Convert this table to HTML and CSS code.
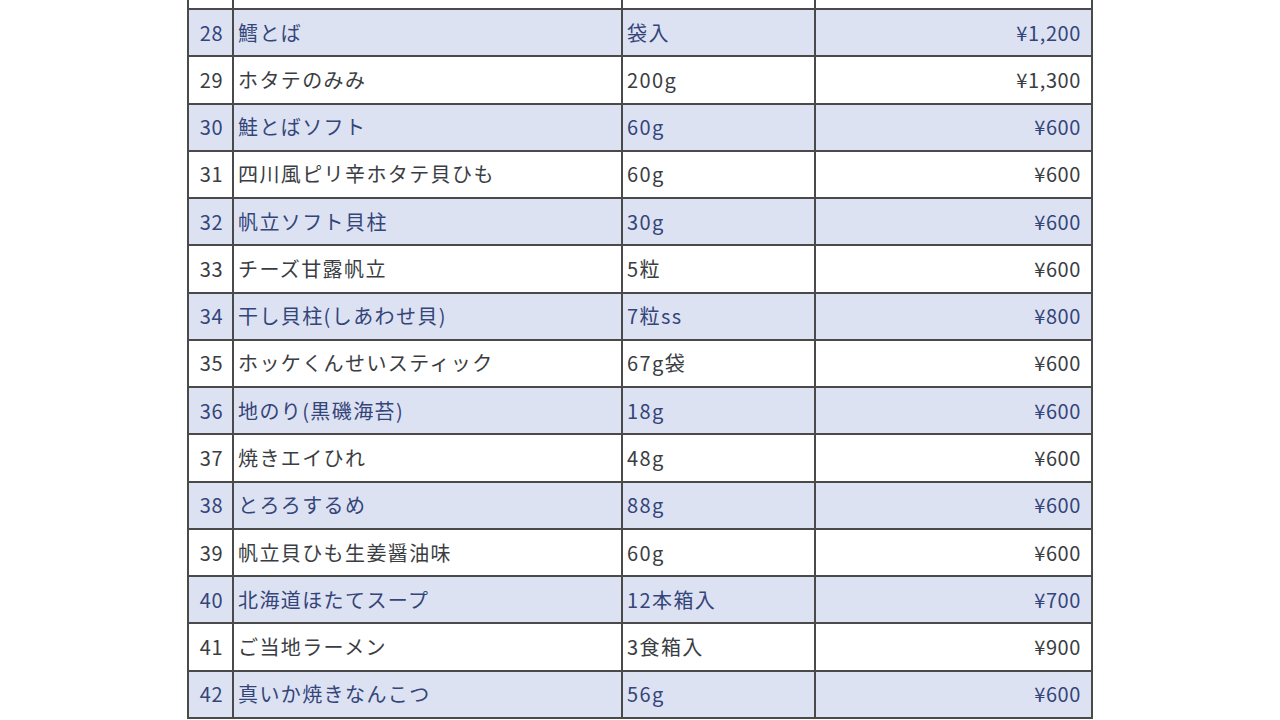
FILE: index.html
```html
<!DOCTYPE html>
<html lang="ja">
<head>
<meta charset="utf-8">
<link rel="stylesheet" href="styles.css">
</head>
<body>
<div class="sheet">
  <div class="row top"><div class="c n"></div><div class="c"></div><div class="c"></div><div class="c"></div></div>
  <div class="row b"><div class="c n">28</div><div class="c">鱈とば</div><div class="c">袋入</div><div class="c p">¥1,200</div></div>
  <div class="row"><div class="c n">29</div><div class="c">ホタテのみみ</div><div class="c">200g</div><div class="c p">¥1,300</div></div>
  <div class="row b"><div class="c n">30</div><div class="c">鮭とばソフト</div><div class="c">60g</div><div class="c p">¥600</div></div>
  <div class="row"><div class="c n">31</div><div class="c">四川風ピリ辛ホタテ貝ひも</div><div class="c">60g</div><div class="c p">¥600</div></div>
  <div class="row b"><div class="c n">32</div><div class="c">帆立ソフト貝柱</div><div class="c">30g</div><div class="c p">¥600</div></div>
  <div class="row"><div class="c n">33</div><div class="c">チーズ甘露帆立</div><div class="c">5粒</div><div class="c p">¥600</div></div>
  <div class="row b"><div class="c n">34</div><div class="c">干し貝柱(しあわせ貝)</div><div class="c">7粒ss</div><div class="c p">¥800</div></div>
  <div class="row"><div class="c n">35</div><div class="c">ホッケくんせいスティック</div><div class="c">67g袋</div><div class="c p">¥600</div></div>
  <div class="row b"><div class="c n">36</div><div class="c">地のり(黒磯海苔)</div><div class="c">18g</div><div class="c p">¥600</div></div>
  <div class="row"><div class="c n">37</div><div class="c">焼きエイひれ</div><div class="c">48g</div><div class="c p">¥600</div></div>
  <div class="row b"><div class="c n">38</div><div class="c">とろろするめ</div><div class="c">88g</div><div class="c p">¥600</div></div>
  <div class="row"><div class="c n">39</div><div class="c">帆立貝ひも生姜醤油味</div><div class="c">60g</div><div class="c p">¥600</div></div>
  <div class="row b"><div class="c n">40</div><div class="c">北海道ほたてスープ</div><div class="c">12本箱入</div><div class="c p">¥700</div></div>
  <div class="row"><div class="c n">41</div><div class="c">ご当地ラーメン</div><div class="c">3食箱入</div><div class="c p">¥900</div></div>
  <div class="row b"><div class="c n">42</div><div class="c">真いか焼きなんこつ</div><div class="c">56g</div><div class="c p">¥600</div></div>
</div>
</body>
</html>
```

FILE: styles.css
```css
html, body {
  margin: 0;
  padding: 0;
  background: #ffffff;
}
body {
  width: 1280px;
  height: 720px;
  overflow: hidden;
  font-family: "Noto Sans CJK JP", "Noto Sans", sans-serif;
}
.sheet {
  display: flex;
  flex-direction: column;
  padding-left: 187px;
}
.row {
  display: grid;
  grid-template-columns: 45px 389px 193px 277px;
  width: 906px;
  height: 47.27px;
  box-sizing: border-box;
  border-left: 2px solid #4a4a4a;
  border-bottom: 2px solid #4a4a4a;
  background: #ffffff;
  color: #3a3d42;
}
.row.top {
  height: 10px;
}
.row.b {
  background: #dde2f2;
  color: #34457a;
}
.c {
  box-sizing: border-box;
  border-right: 2px solid #4a4a4a;
  display: flex;
  align-items: center;
  padding-left: 4px;
  font-size: 20px;
  letter-spacing: 1.4px;
  white-space: nowrap;
  line-height: 1;
}
.c.n {
  justify-content: flex-end;
  padding-right: 9px;
  padding-left: 0;
  letter-spacing: 0.5px;
}
.c.p {
  justify-content: flex-end;
  padding-right: 10px;
  letter-spacing: 0.6px;
}
```
